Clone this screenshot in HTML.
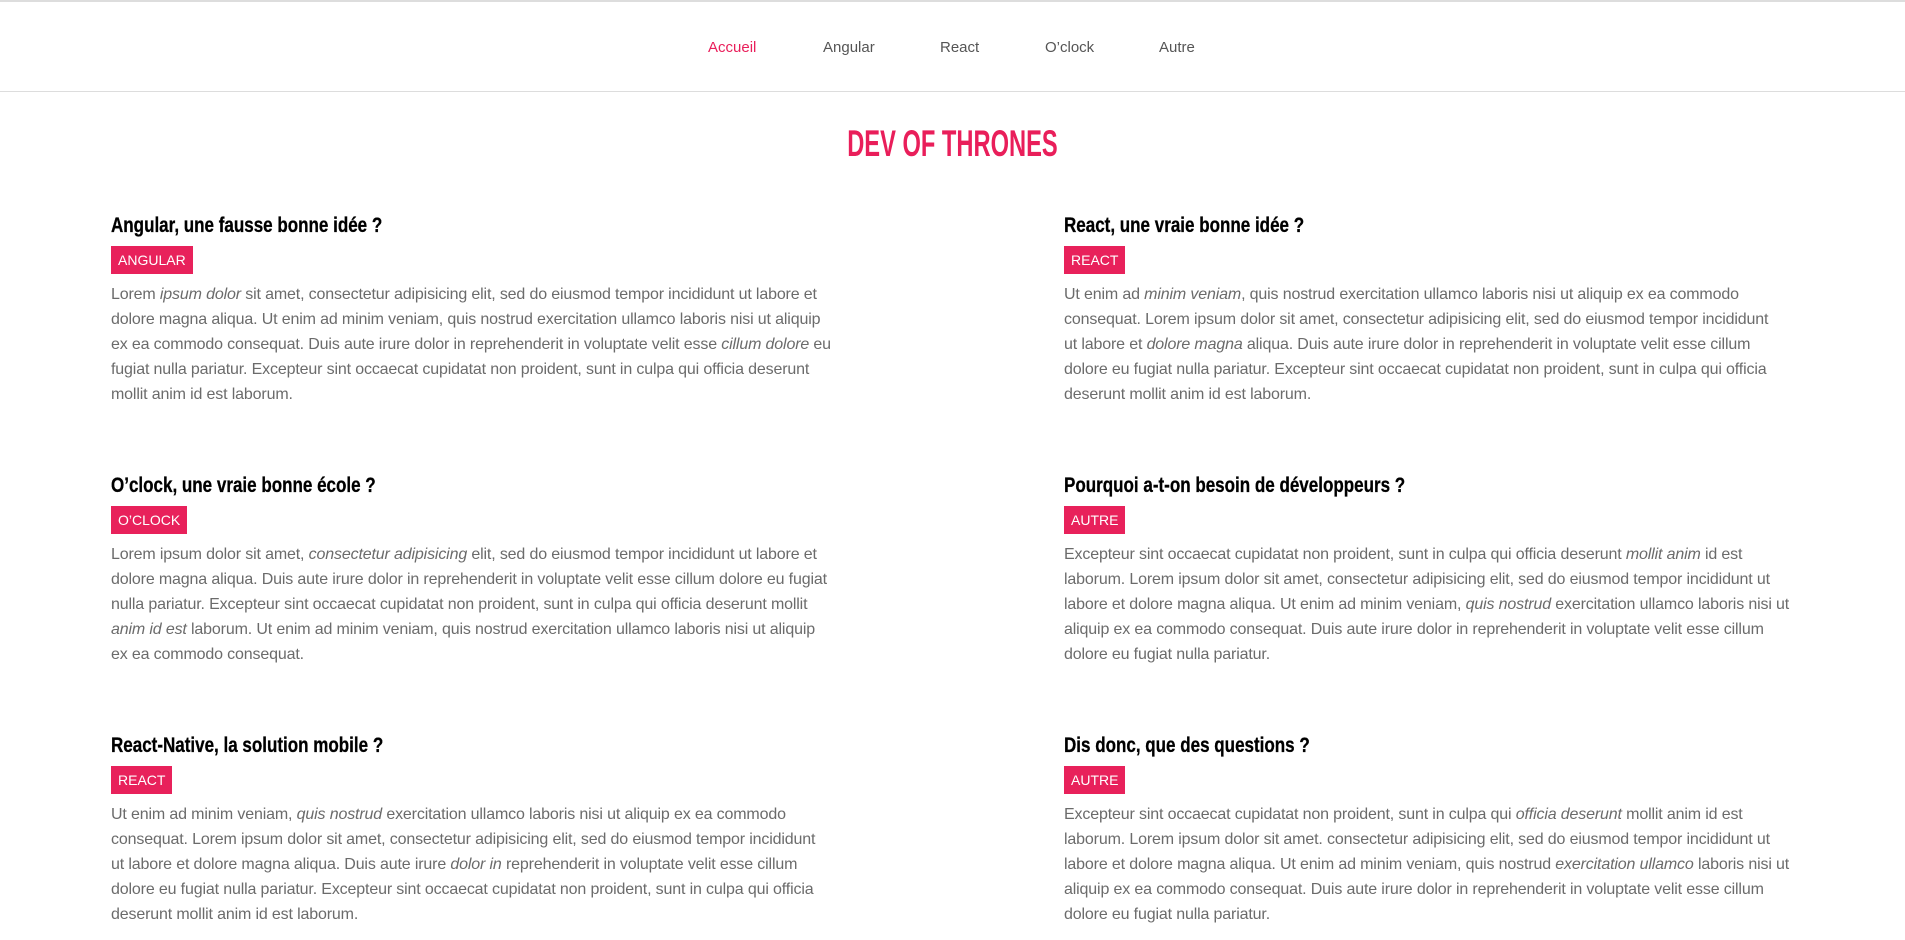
<!DOCTYPE html>
<html><head><meta charset="utf-8"><style>
*{margin:0;padding:0;box-sizing:border-box}
body{width:1905px;height:940px;background:#fff;position:relative;overflow:hidden;font-family:"Liberation Sans",sans-serif}
.top{position:absolute;left:0;top:0;width:1905px;height:2px;background:#ddd}
.navl{position:absolute;left:0;top:91px;width:1905px;height:1px;background:#ddd}
.nav a{position:absolute;top:39px;font-size:15px;color:#555;text-decoration:none;font-weight:300}
h1{position:absolute;left:0;width:1905px;top:123px;text-align:center;color:#e91e5a;font-size:37px;line-height:42px}
h1 span{display:inline-block;transform:scaleX(0.64)}
.b{position:absolute;width:760px}
.b h2{font-size:21px;line-height:26px;color:#000;white-space:nowrap;transform:scaleX(0.81);transform-origin:left;display:block;-webkit-text-stroke:0.3px #000}
.tag{display:inline-block;margin-top:7px;background:#e8215b;color:#fff;font-size:14px;height:28px;line-height:28px;padding:0 7px}
.t{margin-top:8px;color:#6b6b6b;font-size:16px;line-height:25px;letter-spacing:-0.15px;white-space:nowrap;font-weight:300}
</style></head><body>
<div class="top"></div>
<div class="nav">
<a style="left:708px;color:#e91e5a">Accueil</a>
<a style="left:823px">Angular</a>
<a style="left:940px">React</a>
<a style="left:1045px">O’clock</a>
<a style="left:1159px">Autre</a>
</div>
<div class="navl"></div>
<h1><span>DEV OF THRONES</span></h1>

<div class="b" style="left:111px;top:213px">
<h2>Angular, une fausse bonne idée ?</h2>
<span class="tag">ANGULAR</span>
<div class="t">Lorem <i>ipsum dolor</i> sit amet, consectetur adipisicing elit, sed do eiusmod tempor incididunt ut labore et<br>dolore magna aliqua. Ut enim ad minim veniam, quis nostrud exercitation ullamco laboris nisi ut aliquip<br>ex ea commodo consequat. Duis aute irure dolor in reprehenderit in voluptate velit esse <i>cillum dolore</i> eu<br>fugiat nulla pariatur. Excepteur sint occaecat cupidatat non proident, sunt in culpa qui officia deserunt<br>mollit anim id est laborum.</div>
</div>

<div class="b" style="left:1064px;top:213px">
<h2>React, une vraie bonne idée ?</h2>
<span class="tag">REACT</span>
<div class="t">Ut enim ad <i>minim veniam</i>, quis nostrud exercitation ullamco laboris nisi ut aliquip ex ea commodo<br>consequat. Lorem ipsum dolor sit amet, consectetur adipisicing elit, sed do eiusmod tempor incididunt<br>ut labore et <i>dolore magna</i> aliqua. Duis aute irure dolor in reprehenderit in voluptate velit esse cillum<br>dolore eu fugiat nulla pariatur. Excepteur sint occaecat cupidatat non proident, sunt in culpa qui officia<br>deserunt mollit anim id est laborum.</div>
</div>

<div class="b" style="left:111px;top:473px">
<h2>O’clock, une vraie bonne école ?</h2>
<span class="tag">O’CLOCK</span>
<div class="t">Lorem ipsum dolor sit amet, <i>consectetur adipisicing</i> elit, sed do eiusmod tempor incididunt ut labore et<br>dolore magna aliqua. Duis aute irure dolor in reprehenderit in voluptate velit esse cillum dolore eu fugiat<br>nulla pariatur. Excepteur sint occaecat cupidatat non proident, sunt in culpa qui officia deserunt mollit<br><i>anim id est</i> laborum. Ut enim ad minim veniam, quis nostrud exercitation ullamco laboris nisi ut aliquip<br>ex ea commodo consequat.</div>
</div>

<div class="b" style="left:1064px;top:473px">
<h2>Pourquoi a-t-on besoin de développeurs ?</h2>
<span class="tag">AUTRE</span>
<div class="t">Excepteur sint occaecat cupidatat non proident, sunt in culpa qui officia deserunt <i>mollit anim</i> id est<br>laborum. Lorem ipsum dolor sit amet, consectetur adipisicing elit, sed do eiusmod tempor incididunt ut<br>labore et dolore magna aliqua. Ut enim ad minim veniam, <i>quis nostrud</i> exercitation ullamco laboris nisi ut<br>aliquip ex ea commodo consequat. Duis aute irure dolor in reprehenderit in voluptate velit esse cillum<br>dolore eu fugiat nulla pariatur.</div>
</div>

<div class="b" style="left:111px;top:733px">
<h2>React-Native, la solution mobile ?</h2>
<span class="tag">REACT</span>
<div class="t">Ut enim ad minim veniam, <i>quis nostrud</i> exercitation ullamco laboris nisi ut aliquip ex ea commodo<br>consequat. Lorem ipsum dolor sit amet, consectetur adipisicing elit, sed do eiusmod tempor incididunt<br>ut labore et dolore magna aliqua. Duis aute irure <i>dolor in</i> reprehenderit in voluptate velit esse cillum<br>dolore eu fugiat nulla pariatur. Excepteur sint occaecat cupidatat non proident, sunt in culpa qui officia<br>deserunt mollit anim id est laborum.</div>
</div>

<div class="b" style="left:1064px;top:733px">
<h2>Dis donc, que des questions ?</h2>
<span class="tag">AUTRE</span>
<div class="t">Excepteur sint occaecat cupidatat non proident, sunt in culpa qui <i>officia deserunt</i> mollit anim id est<br>laborum. Lorem ipsum dolor sit amet. consectetur adipisicing elit, sed do eiusmod tempor incididunt ut<br>labore et dolore magna aliqua. Ut enim ad minim veniam, quis nostrud <i>exercitation ullamco</i> laboris nisi ut<br>aliquip ex ea commodo consequat. Duis aute irure dolor in reprehenderit in voluptate velit esse cillum<br>dolore eu fugiat nulla pariatur.</div>
</div>
</body></html>
